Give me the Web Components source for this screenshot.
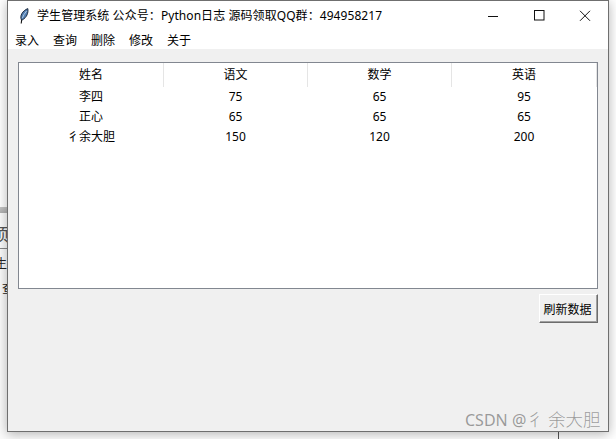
<!DOCTYPE html>
<html lang="zh"><head><meta charset="utf-8">
<style>
html,body{margin:0;padding:0;background:#fff;width:616px;height:439px;overflow:hidden}
body{font:12px "Noto Sans","Noto Sans CJK SC",sans-serif;color:#000;position:relative}
</style></head><body>
<back-desktop></back-desktop>
<app-window>
  <title-bar slot="title">学生管理系统 公众号：Python日志 源码领取QQ群：494958217</title-bar>
  <menu-bar slot="menu"><span>录入</span><span>查询</span><span>删除</span><span>修改</span><span>关于</span></menu-bar>
  <data-table cols="姓名,语文,数学,英语" rows="李四,75,65,95;正心,65,65,65;彳余大胆,150,120,200"></data-table>
  <foot-row><raised-button>刷新数据</raised-button></foot-row>
</app-window>
<water-mark>CSDN @<b>彳</b> <b>余大胆</b></water-mark>
<script>
function def(name,html,init){customElements.define(name,class extends HTMLElement{connectedCallback(){if(this.shadowRoot)return;const r=this.attachShadow({mode:'open'});r.innerHTML=html;init&&init(this,r)}})}
def('back-desktop',`<style>:host{position:absolute;left:0;top:0;width:616px;height:439px;overflow:hidden;display:block;color:#222}
.line{position:absolute;left:558px;top:0;bottom:0;width:1px;background:#555}
.win{position:absolute;left:0;top:207px;width:20px;bottom:0;background:#fbfbfb}
.bar{height:6px;background:linear-gradient(#c4c4c4,#b0b0b0)}
.a{position:absolute;left:-8px;top:17px;font-size:17px;line-height:22px;color:#555}
.l{position:absolute;left:0;top:41px;width:20px;height:1px;background:#888}
.b{position:absolute;left:-5px;top:49px;font-size:12px;line-height:16px}
.c{position:absolute;left:2px;top:74px;font-size:12px;line-height:16px}</style>
<div class="line"></div><div class="win"><div class="bar"></div><div class="a">项</div><div class="l"></div><div class="b">生</div><div class="c">查</div></div>`);
def('app-window',`<style>:host{position:absolute;left:7px;top:0;width:600px;height:430px;display:flex;flex-direction:column;background:#f0f0f0;border:1px solid #6f6f6f;box-shadow:0 2px 11px rgba(0,0,0,.3)}
.body{flex:1;display:flex;flex-direction:column;padding:13px 10px 0 10px}</style>
<slot name="title"></slot><slot name="menu"></slot><div class="body"><slot></slot></div>`);
def('title-bar',`<style>:host{display:flex;align-items:center;height:29px;background:#fff;flex:none}
svg.f{margin-left:8px;width:16px;height:16px;flex:none;margin-right:5px}
.t{flex:1;white-space:nowrap;font-size:12px;line-height:29px;letter-spacing:.07px}
.b{width:46px;height:29px;display:flex;align-items:center;justify-content:center;flex:none}
.b svg{width:12px;height:12px}</style>
<svg class="f" viewBox="0 0 16 16"><path d="M5.200 15.500C5.500 13 5.700 11.500 6 10" stroke="#111" stroke-width="1.100" fill="none"/><path d="M5.400 11.800C3.600 8 6.300 2.800 11.800 .6 12.600 4.500 10.800 9.600 6.400 11.800Z" fill="#4f7cb0" stroke="#1e2c40" stroke-width="1"/><path d="M6.300 10.200C7.300 7.500 8.800 5 10.600 3" stroke="#b9cfe6" stroke-width=".9" fill="none"/></svg>
<div class="t"><slot></slot></div>
<div class="b"><svg viewBox="0 0 12 12"><path d="M1 6.500H11" stroke="#111"/></svg></div>
<div class="b"><svg viewBox="0 0 12 12"><rect x="1.500" y=".5" width="9.500" height="9.500" fill="none" stroke="#111"/></svg></div>
<div class="b"><svg viewBox="0 0 12 12"><path d="M1 .8L11 10.800M11 .8L1 10.800" stroke="#111" fill="none"/></svg></div>`);
def('menu-bar',`<style>:host{display:flex;height:19px;background:#fff;flex:none;padding-left:7px;gap:14px;line-height:21px;font-size:12px}</style><slot></slot>`);
def('data-table',`<style>:host{display:flex;flex-direction:column;width:578px;height:225px;background:#fff;border:1px solid #828790;flex:none}
.h,.r{display:grid;grid-template-columns:145px 144px 144px 145px;text-align:center}
.h{height:24px;line-height:24px}.h div{border-right:1px solid #e5e5e5;box-sizing:border-box}
.r{height:20px;line-height:20px}.r div{white-space:nowrap;border-right:1px solid transparent;box-sizing:border-box}</style><div id="w"></div>`,(h,r)=>{
 const w=r.getElementById('w');
 let s='<div class="h">'+h.getAttribute('cols').split(',').map(c=>`<div>${c}</div>`).join('')+'</div>';
 s+=h.getAttribute('rows').split(';').map(x=>'<div class="r">'+x.split(',').map(c=>`<div>${c}</div>`).join('')+'</div>').join('');
 w.innerHTML=s;
});
def('foot-row',`<style>:host{display:flex;justify-content:flex-end;padding-top:5px}</style><slot></slot>`);
def('raised-button',`<style>:host{display:flex;align-items:center;justify-content:center;box-sizing:border-box;width:59px;height:29px;padding-right:2px;background:#f0f0f0;border:1px solid;border-color:#fff #6d6d6d #6d6d6d #fff;box-shadow:inset -1px -1px 0 #a0a0a0;font-size:12px}</style><slot></slot>`);
def('water-mark',`<style>:host{position:absolute;left:465px;top:408px;font-size:16px;line-height:22px;color:rgba(120,120,120,.72);white-space:nowrap;display:block}
::slotted(b){font-size:17.5px;font-weight:300}</style><slot></slot>`);
</script>
</body></html>
